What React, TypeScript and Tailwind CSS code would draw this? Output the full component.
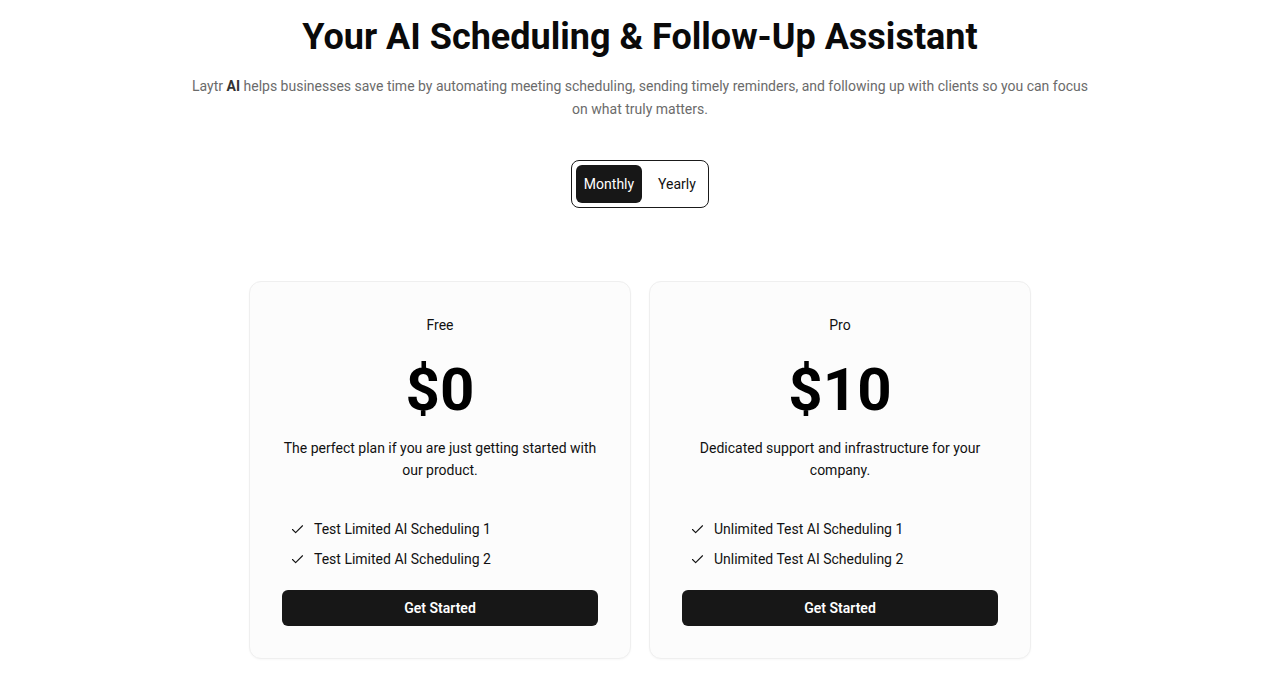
import { Check } from "lucide-react";

const plans = [
  {
    name: "Free",
    price: "$0",
    desc: "The perfect plan if you are just getting started with our product.",
    features: ["Test Limited AI Scheduling 1", "Test Limited AI Scheduling 2"],
  },
  {
    name: "Pro",
    price: "$10",
    desc: "Dedicated support and infrastructure for your company.",
    features: ["Unlimited Test AI Scheduling 1", "Unlimited Test AI Scheduling 2"],
  },
];

const PlanCard = ({ plan }: { plan: (typeof plans)[number] }) => (
  <div className="w-[382px] rounded-xl border border-[#efefef] bg-[#fcfcfc] px-8 pt-[33px] pb-8 shadow-[0_1px_2px_rgba(0,0,0,0.03)]">
    <p className="text-center text-sm leading-5 text-[#111]">{plan.name}</p>
    <p className="mt-[25px] text-center text-6xl font-bold leading-none text-black">{plan.price}</p>
    <p className="mt-[17px] text-center text-sm leading-[22px] text-[#111]">{plan.desc}</p>
    <ul className="mt-[38px] flex flex-col gap-2.5 px-2">
      {plan.features.map((f) => (
        <li key={f} className="flex items-center gap-[9px] text-sm leading-5 text-[#111]">
          <Check size={15} strokeWidth={1.75} />
          {f}
        </li>
      ))}
    </ul>
    <button className="mt-[21px] h-9 w-full rounded-md bg-[#171717] text-sm font-semibold text-white">
      Get Started
    </button>
  </div>
);

export default function App() {
  return (
    <div className="min-h-screen bg-white pt-[17px] font-['Roboto',sans-serif]">
      <h1 className="text-center text-4xl font-bold leading-10 text-[#0a0a0a]">
        Your AI Scheduling &amp; Follow-Up Assistant
      </h1>
      <p className="mx-auto mt-[18px] max-w-[900px] text-center text-sm leading-[23px] text-[#6b6b6b]">
        Laytr <span className="font-bold text-[#333]">AI</span> helps businesses save time by automating meeting
        scheduling, sending timely reminders, and following up with clients so you can focus on what truly matters.
      </p>
      <div className="mt-[39px] flex justify-center">
        <div className="flex gap-1 rounded-lg border border-[#1a1a1a] p-1">
          <button className="h-[38px] w-[66px] rounded-md bg-[#171717] text-sm text-white">Monthly</button>
          <button className="h-[38px] w-[58px] rounded-md pl-1 text-sm text-[#111]">Yearly</button>
        </div>
      </div>
      <div className="mt-[73px] flex justify-center gap-[18px]">
        {plans.map((p) => (
          <PlanCard key={p.name} plan={p} />
        ))}
      </div>
    </div>
  );
}
